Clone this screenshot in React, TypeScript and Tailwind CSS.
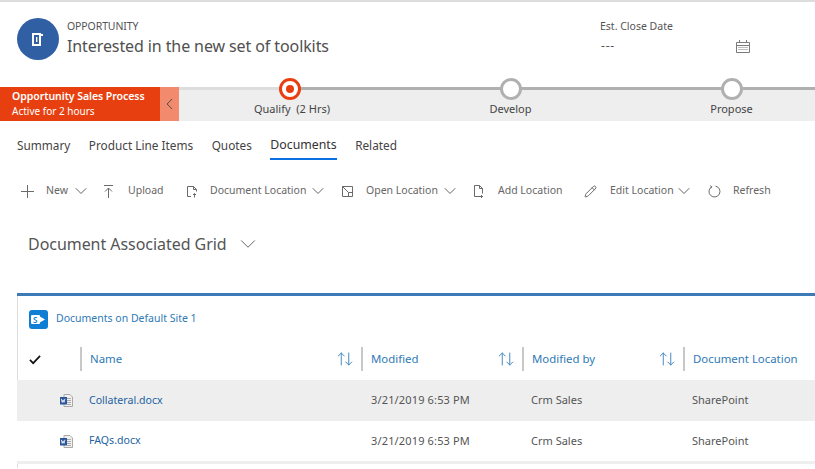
import React from 'react';
import { ArrowUpDown, ChevronDown, ChevronLeft, Pencil } from 'lucide-react';

const tabs = ['Summary', 'Product Line Items', 'Quotes', 'Documents', 'Related'];

const Glyph = ({ children }: { children: React.ReactNode }) => (
  <svg width="13" height="13" viewBox="0 0 13 13" fill="none" stroke="#6b6b6b" strokeWidth="1">
    {children}
  </svg>
);

const commands = [
  {
    label: 'New',
    icon: <Glyph><path d="M6.5 0v13M0 6.5h13" /></Glyph>,
    caret: true, iconW: 'w-[25px]', labelW: 'w-[24px]', gap: 'mr-[11px]',
  },
  {
    label: 'Upload',
    icon: <Glyph><path d="M2 .5h9M6.5 13V3M3 6.5l3.5-3.5L10 6.5" /></Glyph>,
    caret: false, iconW: 'w-[26px]', labelW: 'w-[36px]', gap: 'mr-[21px]',
  },
  {
    label: 'Document Location',
    icon: <Glyph><path d="M6 11.5H2.5v-10h6l3 3v2M8.5 1.5v3h3M9.5 12.5v-4M8 10l1.5-1.5L11 10" /></Glyph>,
    caret: true, iconW: 'w-[25px]', labelW: 'w-[97px]', gap: 'mr-[13px]',
  },
  {
    label: 'Open Location',
    icon: <Glyph><path d="M1.5 1.5h10v10h-10zM1.5 1.5l6 6h4M7.5 7.5v4" /></Glyph>,
    caret: true, iconW: 'w-[25px]', labelW: 'w-[73px]', gap: 'mr-[12px]',
  },
  {
    label: 'Add Location',
    icon: <Glyph><path d="M8 11.5H2.5V.5h5l3 3v5M7.5.5v3h3M9.5 10v3M8 11.5h3" /></Glyph>,
    caret: false, iconW: 'w-[26px]', labelW: 'w-[65px]', gap: 'mr-[21px]',
  },
  {
    label: 'Edit Location',
    icon: <Pencil size={13} strokeWidth={1} absoluteStrokeWidth className="text-[#6b6b6b]" />,
    caret: true, iconW: 'w-[26px]', labelW: 'w-[63px]', gap: 'mr-[14px]',
  },
  {
    label: 'Refresh',
    icon: <Glyph><path d="M3.8 1.7A5.5 5.5 0 1 0 7.5 1.1M2.2.6l1.6 1.1-1 1.6" /></Glyph>,
    caret: false, iconW: 'w-[25px]', labelW: 'w-[36px]', gap: '',
  },
];

const rows = [
  { name: 'Collateral.docx', bg: 'bg-[#eeeeee]', h: 'h-[41px]' },
  { name: 'FAQs.docx', bg: 'bg-white', h: 'h-[40px]' },
];

function WordIcon() {
  return (
    <svg width="13" height="13" viewBox="0 0 13 13">
      <path d="M4 .5h6l2.5 2.5v9.5H4z" fill="#f1f1f1" stroke="#a9a9a9" />
      <path d="M7 4.5h4M7 6.5h4M7 8.5h4M7 10.5h4" stroke="#a9a9a9" />
      <rect x="0" y="3" width="7" height="7.5" fill="#2b579a" />
      <path d="M1.3 4.8l.9 3.6.9-2.6.9 2.6.9-3.6" fill="none" stroke="#fff" strokeWidth=".8" />
    </svg>
  );
}

function Stage({ label, active }: { label: string; active?: boolean }) {
  return (
    <div className="relative flex w-[221px] shrink-0 justify-center pt-[14px]">
      {active ? (
        <div className="absolute left-[100px] top-[-9px] flex h-[22px] w-[22px] items-center justify-center rounded-full border-[3px] border-[#e83f10] bg-white">
          <div className="h-[8px] w-[8px] rounded-full bg-[#e83f10]" />
        </div>
      ) : (
        <div className="absolute left-[100px] top-[-9px] h-[22px] w-[22px] rounded-full border-[3px] border-[#b0b0b0] bg-white" />
      )}
      <span className={`whitespace-pre text-[11px] leading-[16px] text-[#444444] ${active ? 'ml-[5px]' : ''}`}>{label}</span>
    </div>
  );
}

function HeaderCell({ label, width, sort = true }: { label: string; width: string; sort?: boolean }) {
  return (
    <div className={`flex h-[24px] shrink-0 items-center justify-between pl-[8px] pr-[7px] ${width} ${sort ? 'border-r-2 border-[#c8c8c8]' : ''}`}>
      <span className="whitespace-nowrap text-[11.4px] text-[#2f7ab5]">{label}</span>
      {sort && <ArrowUpDown size={18} strokeWidth={1} absoluteStrokeWidth className="text-[#4a8abf]" />}
    </div>
  );
}

export default function App() {
  return (
    <div className="h-[469px] w-[815px] overflow-hidden bg-white font-['Noto_Sans',sans-serif]">
      <div className="h-[2px] bg-[#dddddd]" />

      {/* Record header */}
      <div className="flex h-[85px] pl-[17px] pt-[16px]">
        <div className="flex h-[42px] w-[42px] items-center justify-center rounded-full bg-[#305fa3]">
          <svg width="12" height="13" viewBox="0 0 12 13">
            <path d="M0 0h9v1h2v2h-2v10H0z" fill="#fff" />
            <rect x="2" y="2" width="5" height="9" fill="#305fa3" />
            <rect x="4" y="4" width="1.4" height="5" fill="#fff" />
          </svg>
        </div>
        <div className="ml-[8px] w-[533px]">
          <div className="text-[10.5px] leading-[16px] tracking-[-0.1px] text-[#555555]">OPPORTUNITY</div>
          <div className="text-[16px] leading-[24px] tracking-[-0.1px] text-[#505050]">Interested in the new set of toolkits</div>
        </div>
        <div className="w-[150px]">
          <div className="text-[10.5px] leading-[16px] text-[#555555]">Est. Close Date</div>
          <div className="flex items-center justify-between pt-[3px]">
            <span className="pl-[1px] text-[12px] leading-[18px] tracking-[0.8px] text-[#555555]">---</span>
            <svg width="14" height="13" viewBox="0 0 14 13" fill="none" stroke="#7a7a7a" strokeWidth="1">
              <path d="M.5 2.5h13v10H.5zM.5 5.5h13M3.5 0v2M10.5 0v2" />
              <path d="M2.5 7.5h9M2.5 9.5h9" strokeDasharray="1 1" />
            </svg>
          </div>
        </div>
      </div>

      {/* Process bar */}
      <div className="flex h-[34px]">
        <div className="flex w-[160px] shrink-0 flex-col justify-center bg-[#e83f10] pl-[12px] text-white">
          <div className="text-[10.5px] font-semibold leading-[15px] tracking-[-0.05px]">Opportunity Sales Process</div>
          <div className="text-[10px] leading-[15px]">Active for 2 hours</div>
        </div>
        <div className="flex w-[19px] shrink-0 items-center justify-center bg-[#f28a6e]">
          <ChevronLeft size={20} strokeWidth={1} absoluteStrokeWidth className="text-[#444444]" />
        </div>
        <div className="relative flex flex-1 bg-[#eeeeee]">
          <div className="absolute left-0 top-0 h-[3px] w-[111px] bg-[#dddddd]" />
          <div className="absolute left-[111px] right-0 top-0 h-[3px] bg-[#b0b0b0]" />
          <Stage label="Qualify  (2 Hrs)" active />
          <Stage label="Develop" />
          <Stage label="Propose" />
        </div>
      </div>

      {/* Tabs */}
      <div className="flex h-[39px] gap-[18.5px] pl-[17px] pt-[14px]">
        {tabs.map((tab) =>
          tab === 'Documents' ? (
            <div key={tab} className="h-[25px] border-b-2 border-[#0a6fe0] text-[12.3px] leading-[20px] text-[#333333]">
              {tab}
            </div>
          ) : (
            <div key={tab} className="text-[11.8px] leading-[20px] text-[#444444]">
              {tab}
            </div>
          ),
        )}
      </div>

      {/* Command bar */}
      <div className="flex h-[60px] items-center pl-[21px] pt-[2px]">
        {commands.map((c) => (
          <div key={c.label} className={`flex items-center ${c.gap}`}>
            <div className={c.iconW}>{c.icon}</div>
            <span className={`whitespace-nowrap text-[10.5px] text-[#666666] ${c.labelW}`}>{c.label}</span>
            {c.caret && <ChevronDown size={20} strokeWidth={1} absoluteStrokeWidth className="ml-[1px] text-[#666666]" />}
          </div>
        ))}
      </div>

      {/* View selector */}
      <div className="flex h-[73px] items-start pl-[28px] pt-[12px]">
        <span className="text-[16px] leading-[24px] tracking-[-0.05px] text-[#555555]">Document Associated Grid</span>
        <ChevronDown size={26} strokeWidth={1} absoluteStrokeWidth className="ml-[8px] mt-[-1px] text-[#666666]" />
      </div>

      {/* Documents card */}
      <div className="ml-[17px] border-t-[3px] border-[#3d7ab8]">
        <div className="border-l border-[#dddddd]">
          <div className="flex h-[46px] items-center pl-[11px]">
            <div className="flex h-[19px] w-[19px] items-center justify-center rounded-[3px] bg-[#0f7fd6]">
              <svg width="15" height="11" viewBox="0 0 15 11">
                <path d="M8 2l6 3.5L8 9z" fill="#fff" />
                <rect x="0" y="1" width="9" height="9" rx="1" fill="#fff" />
                <text x="2" y="8.5" fontSize="8" fontWeight="600" fill="#0f7fd6" fontFamily="Noto Sans">S</text>
              </svg>
            </div>
            <span className="ml-[8px] text-[10.5px] text-[#2f7ab5]">Documents on Default Site 1</span>
          </div>
          <div className="flex h-[38px] items-start pt-[5px]">
            <div className="flex h-[24px] w-[64px] shrink-0 items-center border-r-2 border-[#c8c8c8] pl-[11px]">
              <svg width="12" height="11" viewBox="0 0 13 11">
                <path d="M1 6l3.5 3.5L12 1.5" fill="none" stroke="#111" strokeWidth="1.8" />
              </svg>
            </div>
            <HeaderCell label="Name" width="w-[281px]" />
            <HeaderCell label="Modified" width="w-[161px]" />
            <HeaderCell label="Modified by" width="w-[161px]" />
            <HeaderCell label="Document Location" width="w-[130px]" sort={false} />
          </div>
        </div>
        {rows.map((r) => (
          <div key={r.name} className={`flex items-center text-[11px] text-[#555555] ${r.bg} ${r.h}`}>
            <div className="w-[43px] shrink-0" />
            <div className="w-[29px] shrink-0">
              <WordIcon />
            </div>
            <div className="w-[282px] shrink-0 text-[10.6px] text-[#22629f]">{r.name}</div>
            <div className="w-[160px] shrink-0 tracking-[0.15px]">3/21/2019 6:53 PM</div>
            <div className="w-[161px] shrink-0">Crm Sales</div>
            <div>SharePoint</div>
          </div>
        ))}
        <div className="h-[3px] bg-[#eeeeee]" />
        <div className="h-[4px] border-l border-[#dddddd]" />
      </div>
    </div>
  );
}
